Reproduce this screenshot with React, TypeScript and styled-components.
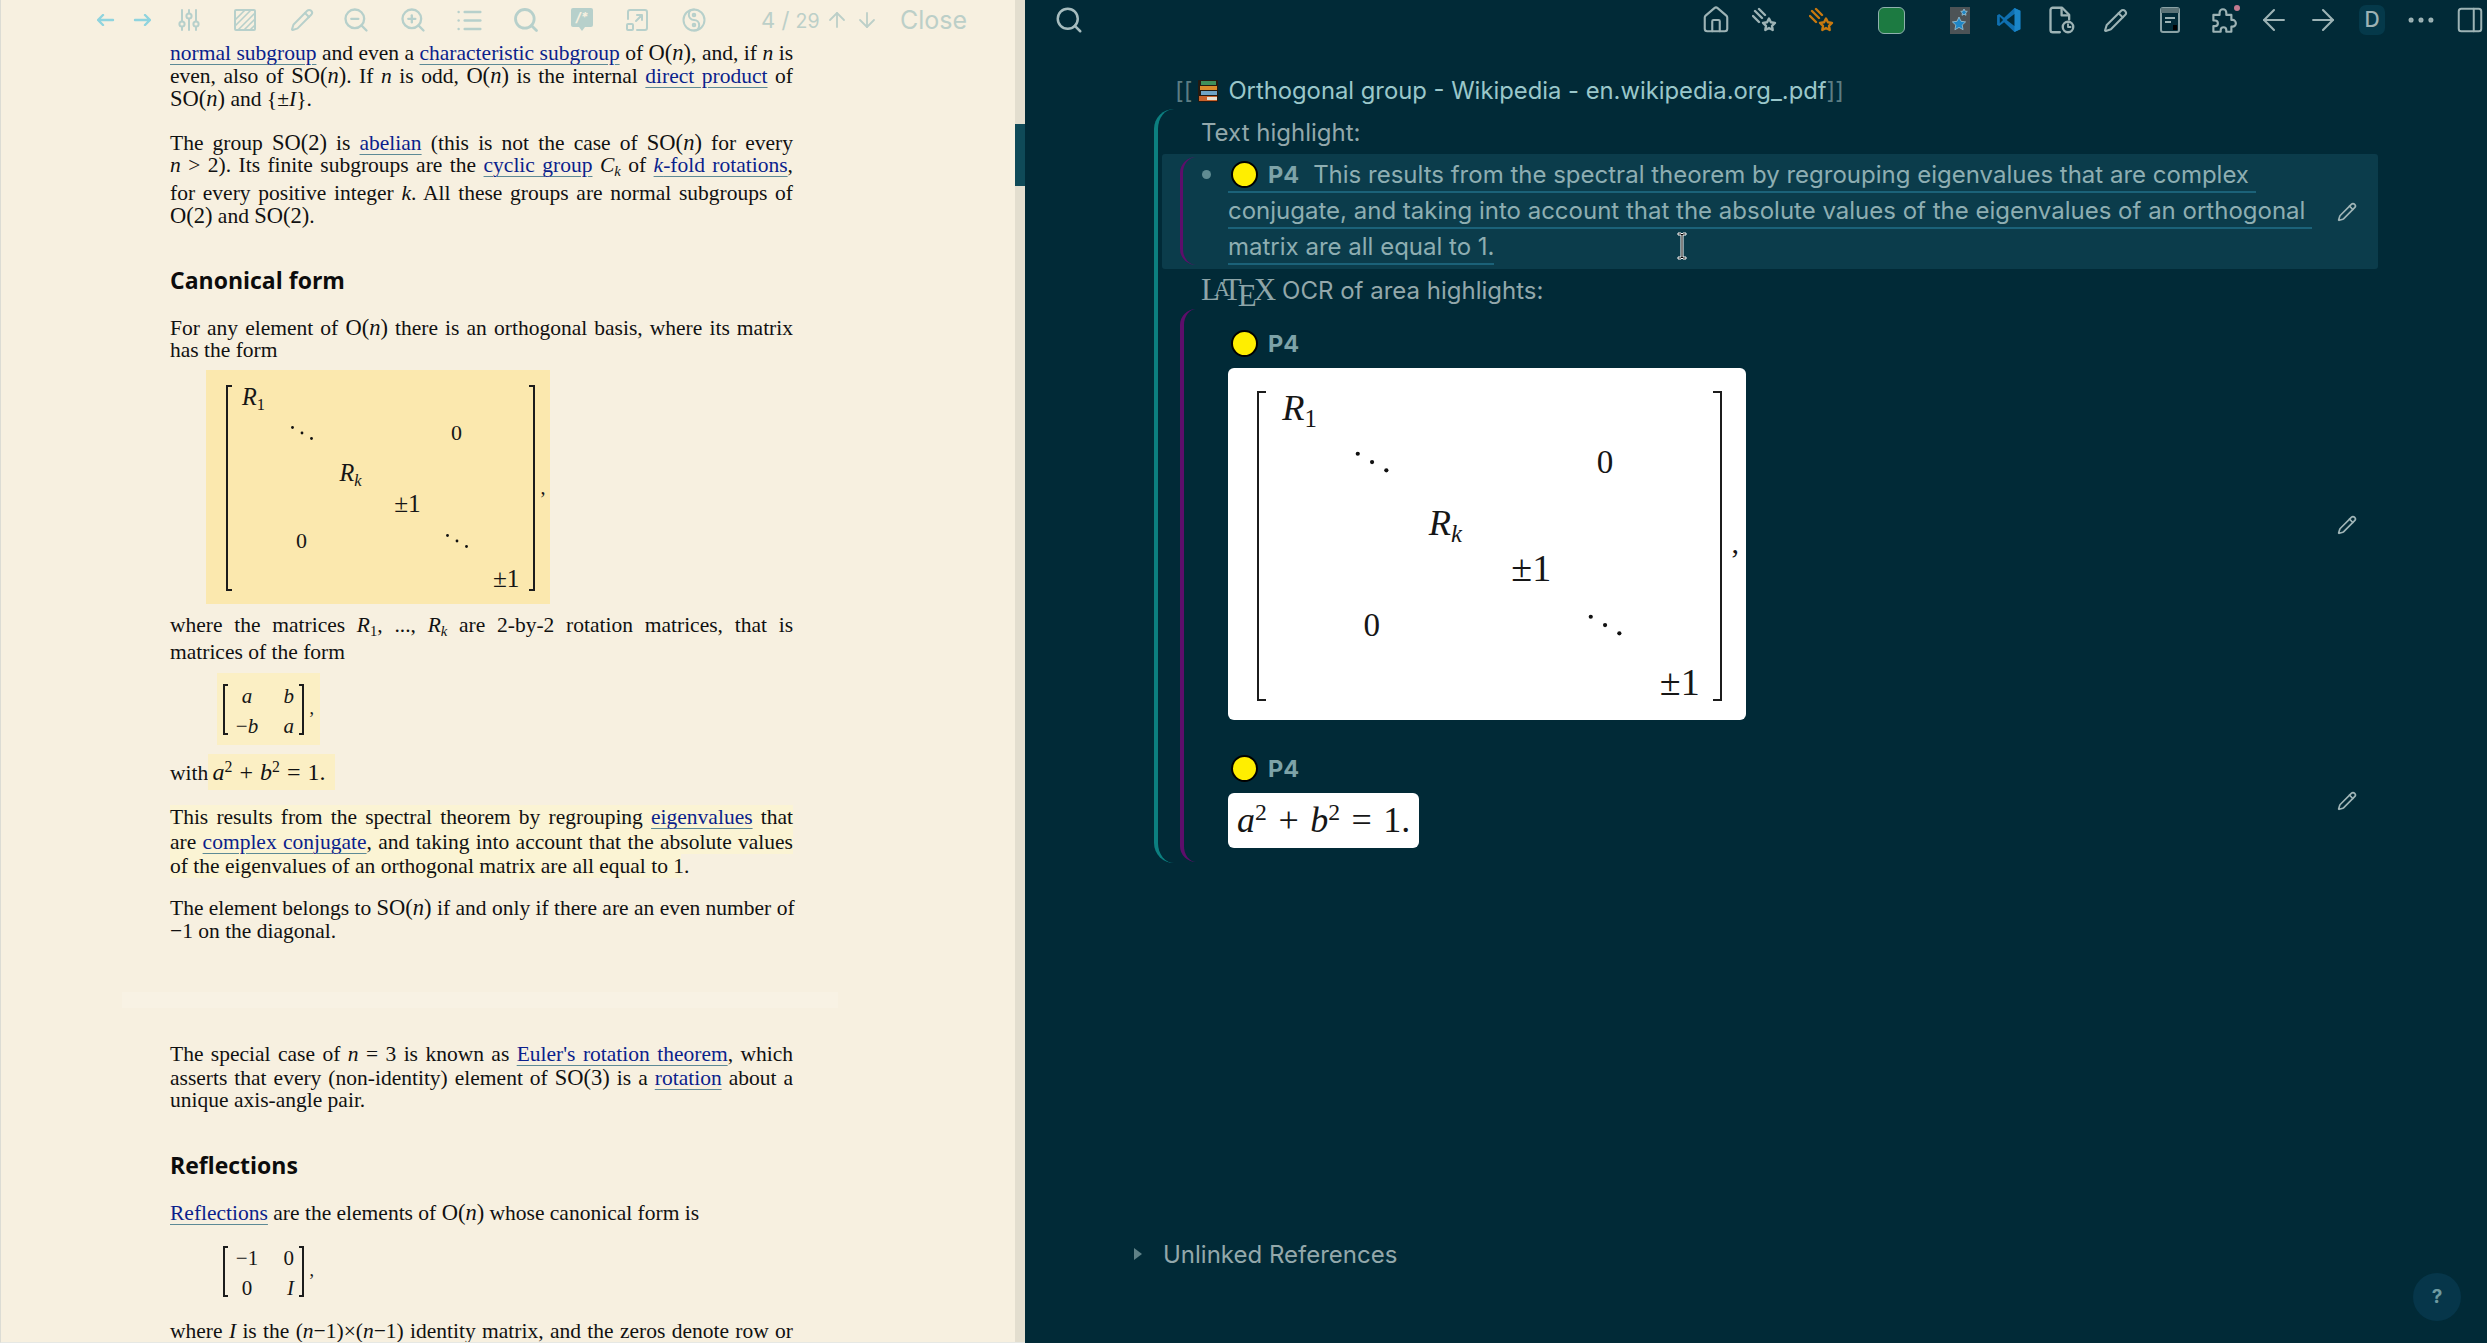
import React from "react";
import styled, { createGlobalStyle } from "styled-components";
import {
  ArrowLeft, ArrowRight, ArrowUp, ArrowDown, Pencil, ZoomIn, ZoomOut, List, Search,
  House, MoreHorizontal, PanelRight,
} from "lucide-react";

const Global = createGlobalStyle`
  html, body { margin: 0; padding: 0; width: 2487px; height: 1343px; overflow: hidden; background: #012a37; }
  * { box-sizing: border-box; }
`;

const Screen = styled.div`
  display: flex;
  width: 2487px;
  height: 1343px;
  overflow: hidden;
`;

/* ---------- left: pdf viewer ---------- */
const PdfPanel = styled.div`
  display: flex;
  width: 1025px;
  height: 1343px;
  flex: none;
  background: #f7f0e0;
  border-left: 1px solid #dcdcd4;
  border-bottom: 1px solid #e6e8e4;
`;
const PdfColumn = styled.div`
  flex: 1;
  min-width: 0;
  overflow: hidden;
`;
const ScrollTrack = styled.div`
  width: 10px;
  flex: none;
  background: #e3decf;
`;
const ScrollThumb = styled.div`
  width: 10px;
  height: 62px;
  margin-top: 124px;
  background: #0f4a58;
`;
const Toolbar = styled.div`
  display: flex;
  align-items: center;
  height: 40px;
`;
const PdfBar = styled(Toolbar)`
  padding-left: 88px;
  margin-bottom: 1px;
  color: #b7d0cb;
`;
const Slot = styled.div<{ $ml?: number; $color?: string }>`
  width: 34px;
  height: 34px;
  flex: none;
  display: flex;
  align-items: center;
  justify-content: center;
  margin-left: ${(p) => p.$ml ?? 0}px;
  color: ${(p) => p.$color ?? "inherit"};
`;
const Counter = styled.div`
  margin-left: 50px;
  width: 58px;
  font: 400 22px/1 Inter, sans-serif;
  color: #bccfc8;
  white-space: nowrap;
`;
const CounterSmall = styled.span`
  font-size: 19.5px;
`;
const CloseLabel = styled.div`
  margin-left: 16px;
  font: 400 25px/1 Inter, sans-serif;
  color: #bccfc8;
`;
const PdfText = styled.div`
  width: 623px;
  margin-left: 169px;
  font-family: "Liberation Serif", "Times New Roman", serif;
  font-size: 21.5px;
  color: #111;
`;
const Para = styled.div<{ $mt?: number }>`
  margin-top: ${(p) => p.$mt ?? 0}px;
`;
const Line = styled.div<{ $h?: number; $fit?: boolean; $tint?: boolean }>`
  height: ${(p) => p.$h ?? 23}px;
  line-height: ${(p) => p.$h ?? 23}px;
  white-space: nowrap;
  text-align: justify;
  text-align-last: ${(p) => (p.$fit ? "left" : "justify")};
  ${(p) => (p.$tint ? "background: #fbf4d4;" : "")}
`;
const TintedLast = styled(Line)`
  width: 511px;
`;
const Doc = styled.a`
  color: #0b1f8c;
  text-decoration: underline;
  text-decoration-color: #5d8a96;
  text-decoration-thickness: 1px;
  text-underline-offset: 4px;
`;
const M = styled.span`
  font-size: 22.5px;
`;
const Heading = styled.div<{ $mt: number }>`
  margin-top: ${(p) => p.$mt}px;
  height: 30px;
  font: 700 23px/30px "Open Sans", sans-serif;
  color: #0c0c0c;
`;
const I = styled.i`
  font-style: italic;
`;
const Sub = styled.sub`
  font-size: 0.68em;
  line-height: 0;
  vertical-align: -0.3em;
`;
const Sup = styled.sup`
  font-size: 0.66em;
  line-height: 0;
  vertical-align: 0.5em;
`;
const EqMark = styled.span`
  display: inline-block;
  width: 127px;
  height: 36px;
  margin-left: -6px;
  padding-left: 5px;
  background: #fbefc4;
  font-size: 24px;
  word-spacing: 1px;
  text-align-last: left;
`;
const PageBreak = styled.div`
  width: 716px;
  height: 16px;
  margin: 48px 0 35px -48px;
  background: #f8f2e4;
`;

/* matrices */
const MatrixFrame = styled.div<{ $s: number; $bg: string }>`
  width: ${(p) => 344 * p.$s}px;
  padding: ${(p) => 15 * p.$s}px 0 ${(p) => 13 * p.$s}px ${(p) => 19.5 * p.$s}px;
  background: ${(p) => p.$bg};
  display: flex;
  align-items: stretch;
  color: #161616;
  font-family: "Liberation Serif", serif;
  font-size: ${(p) => 22 * p.$s}px;
  flex: none;
`;
const Bracket = styled.div<{ $side: "l" | "r"; $w: number; $b: number }>`
  flex: none;
  width: ${(p) => p.$w}px;
  border: ${(p) => p.$b}px solid #1c1c1c;
  ${(p) => (p.$side === "l" ? "border-right: 0;" : "border-left: 0;")}
`;
const BigGrid = styled.div<{ $s: number }>`
  display: grid;
  flex: none;
  width: ${(p) => 297 * p.$s}px;
  height: ${(p) => 206 * p.$s}px;
  grid-template-columns: ${(p) => [44, 52, 46, 68, 30, 57].map((n) => `${n * p.$s}px`).join(" ")};
  grid-template-rows: ${(p) => [23, 49, 32, 28, 48, 27].map((n) => `${n * p.$s}px`).join(" ")};
`;
const Cell = styled.div<{ $c: number; $r: number; $end?: number }>`
  grid-column: ${(p) => p.$c};
  grid-row: ${(p) => p.$r};
  display: flex;
  align-items: center;
  justify-content: ${(p) => (p.$end !== undefined ? "flex-end" : "center")};
  padding-right: ${(p) => p.$end ?? 0}px;
  white-space: nowrap;
`;
const Term = styled.span<{ $k?: number }>`
  font-size: ${(p) => p.$k ?? 1}em;
`;
const Comma = styled.div<{ $s: number }>`
  align-self: center;
  margin-left: ${(p) => 6 * p.$s}px;
  margin-top: ${(p) => -3 * p.$s}px;
  font-size: ${(p) => 20 * p.$s}px;
  line-height: 1;
`;
const SmallFrame = styled.div<{ $bg?: string; $w: number; $pl: number }>`
  display: flex;
  width: ${(p) => p.$w}px;
  padding: 11px 0 10px ${(p) => p.$pl}px;
  margin-left: ${(p) => 223 - p.$pl - 170}px;
  background: ${(p) => p.$bg ?? "transparent"};
  font-size: 21px;
  color: #161616;
`;
const SmallGrid = styled.div`
  display: grid;
  width: 71px;
  height: 51px;
  grid-template-columns: 38px 33px;
  grid-template-rows: 24px 36px;
`;
const DotsSvg = styled.svg<{ $s: number }>`
  width: ${(p) => 24 * p.$s}px;
  height: ${(p) => 16 * p.$s}px;
  fill: #111;
`;
const Dots = ({ s }: { s: number }) => (
  <DotsSvg $s={s} viewBox="0 0 24 16">
    <circle cx="2.5" cy="2.5" r="1.4" />
    <circle cx="12" cy="8" r="1.4" />
    <circle cx="21.5" cy="13.5" r="1.4" />
  </DotsSvg>
);

const BigMatrix = ({ s, bg }: { s: number; bg: string }) => (
  <MatrixFrame $s={s} $bg={bg}>
    <Bracket $side="l" $w={6 * s} $b={s > 1 ? 2.5 : 2} />
    <BigGrid $s={s}>
      <Cell $c={1} $r={1}><Term $k={1.1}><I>R</I><Sub>1</Sub></Term></Cell>
      <Cell $c={2} $r={2}><Dots s={s} /></Cell>
      <Cell $c={5} $r={2}>0</Cell>
      <Cell $c={3} $r={3}><Term $k={1.1}><I>R</I><Sub><I>k</I></Sub></Term></Cell>
      <Cell $c={4} $r={4}><Term $k={1.15}>±1</Term></Cell>
      <Cell $c={2} $r={5}>0</Cell>
      <Cell $c={5} $r={5}><Dots s={s} /></Cell>
      <Cell $c={6} $r={6} $end={9 * s}><Term $k={1.15}>±1</Term></Cell>
    </BigGrid>
    <Bracket $side="r" $w={6 * s} $b={s > 1 ? 2.5 : 2} />
    <Comma $s={s}>,</Comma>
  </MatrixFrame>
);

const SmallMatrix = ({ bg, w, pl, a, b, c, d }: { bg?: string; w: number; pl: number; a: React.ReactNode; b: React.ReactNode; c: React.ReactNode; d: React.ReactNode }) => (
  <SmallFrame $bg={bg} $w={w} $pl={pl}>
    <Bracket $side="l" $w={5} $b={2} />
    <SmallGrid>
      <Cell $c={1} $r={1}><Term>{a}</Term></Cell>
      <Cell $c={2} $r={1} $end={5}><Term>{b}</Term></Cell>
      <Cell $c={1} $r={2}><Term>{c}</Term></Cell>
      <Cell $c={2} $r={2} $end={5}><Term>{d}</Term></Cell>
    </SmallGrid>
    <Bracket $side="r" $w={5} $b={2} />
    <Comma $s={0.9}>,</Comma>
  </SmallFrame>
);

const MatrixIndent = styled.div`
  margin-left: 36px;
`;

/* ---------- right: notes ---------- */
const NotePanel = styled.div`
  position: relative;
  flex: 1;
  height: 1343px;
  background: #012a37;
  display: flex;
  flex-direction: column;
  font-family: Inter, "Noto Sans", sans-serif;
  color: #93a8ab;
`;
const NoteBar = styled(Toolbar)`
  color: #9db3b5;
`;
const BarSearch = styled.div`
  margin-left: 29px;
  display: flex;
  color: #a6bcbe;
`;
const BarRight = styled.div`
  margin-left: auto;
  display: flex;
  align-items: center;
`;
const GreenSwatch = styled.div`
  width: 27px;
  height: 27px;
  border-radius: 6px;
  background: #1c7a41;
  border: 1px solid #8fb0ae;
`;
const ExtTile = styled.div`
  width: 20px;
  height: 27px;
  background: #4d5356;
  display: flex;
  align-items: center;
  justify-content: center;
`;
const DTile = styled.div`
  width: 26px;
  height: 30px;
  border-radius: 7px;
  background: #05394a;
  color: #9db3b5;
  font: 500 21px/30px Inter, sans-serif;
  text-align: center;
`;
const Dot = styled.i`
  position: absolute;
  right: 0;
  top: 2px;
  width: 6px;
  height: 6px;
  border-radius: 50%;
  background: #c27a8f;
`;
const PuzzleWrap = styled(Slot)`
  position: relative;
`;
const TitleRow = styled.div`
  margin: 33px 0 0 150px;
  height: 36px;
  display: flex;
  align-items: center;
  font-size: 23.8px;
  line-height: 36px;
  white-space: nowrap;
`;
const Brackets = styled.span`
  color: #5c7d84;
`;
const TitleLink = styled.span`
  color: #9ac7ca;
`;
const BookIcon = styled.svg`
  width: 24px;
  height: 24px;
  margin: 0 8px 0 4px;
  flex: none;
`;
const TealBranch = styled.div`
  margin: 0 0 0 129px;
  width: 1224px;
  border-left: 4px solid #0c7f80;
  border-radius: 20px;
  padding: 6px 0 1px;
`;
const Label = styled.div`
  height: 36px;
  margin-left: 43px;
  font-size: 24px;
  line-height: 36px;
  display: flex;
  align-items: center;
  white-space: nowrap;
`;
const ActiveBlock = styled.div`
  margin: 3px 0 4px 4px;
  height: 115px;
  background: #0b3c4b;
  border-radius: 3px;
  padding-top: 3px;
  display: flex;
  justify-content: space-between;
  align-items: center;
`;
const PurpleBranch = styled.div<{ $pb?: number; $pt?: number; $w: number }>`
  margin-left: 18px;
  flex: 1;
  align-self: flex-start;
  border-left: ${(p) => p.$w}px solid #5e0e6b;
  border-radius: 16px;
  padding: ${(p) => p.$pt ?? 0}px 0 ${(p) => p.$pb ?? 0}px ${(p) => 48 - p.$w}px;
  position: relative;
`;
const PurpleOuter = styled(PurpleBranch)`
  margin-left: 22px;
`;
const Bullet = styled.i`
  position: absolute;
  left: 19px;
  top: 13px;
  width: 9px;
  height: 9px;
  border-radius: 50%;
  background: #5f8b92;
`;
const HLine = styled.div`
  width: fit-content;
  height: 36px;
  display: flex;
  align-items: center;
  font-size: 24px;
  white-space: pre;
  border-bottom: 2px solid #1b6279;
  color: #8eaeb2;
  padding-top: 1px;
`;
const Mark = styled.i`
  width: 27px;
  height: 27px;
  flex: none;
  margin-left: 3px;
  border-radius: 50%;
  background: #ffee00;
  border: 2px solid #000;
`;
const PageTag = styled.b`
  margin: 0 14px 0 10px;
  font-weight: 700;
  color: #7da3a8;
  font-size: 23.5px;
`;
const TagRow = styled.div`
  height: 36px;
  display: flex;
  align-items: center;
`;
const EditRow = styled.div<{ $mt?: number }>`
  margin-top: ${(p) => p.$mt ?? 0}px;
  display: flex;
  align-items: center;
  justify-content: space-between;
`;
const PencilBtn = styled.div<{ $mt?: number }>`
  width: 20px;
  height: 20px;
  flex: none;
  margin: ${(p) => p.$mt ?? 0}px 21px 0 0;
  color: #a0b5b7;
  display: flex;
`;
const ShotFrame = styled.div`
  margin-top: 7px;
  border-radius: 6px;
  overflow: hidden;
  width: fit-content;
`;
const EqShot = styled.div`
  margin-top: 7px;
  width: 191px;
  height: 55px;
  border-radius: 6px;
  background: #fff;
  color: #161616;
  font: 36px/55px "Liberation Serif", serif;
  word-spacing: 2.5px;
  padding-left: 9px;
  white-space: nowrap;
`;
const Latex = styled.span`
  display: inline-flex;
  align-items: baseline;
  font-family: "Liberation Serif", serif;
  font-size: 31px;
  margin-right: 6px;
  color: #8ea5a8;
`;
const LatexA = styled.span`
  font-size: 22px;
  margin: 0 -7px 0 -6px;
  transform: translateY(-4px);
`;
const LatexE = styled.span`
  margin: 0 -3px 0 -4px;
  transform: translateY(6px);
`;
const Footer = styled.div`
  margin: auto 0 71px 108px;
  height: 36px;
  display: flex;
  align-items: center;
  font-size: 24px;
  color: #93a8ab;
`;
const Caret = styled.svg`
  width: 10px;
  height: 14px;
  margin-right: 20px;
  fill: #5f8187;
`;
const Help = styled.div`
  position: absolute;
  right: 26px;
  bottom: 22px;
  width: 48px;
  height: 48px;
  border-radius: 50%;
  background: #06364a;
  color: #6e9aa1;
  font: 700 19px/48px Inter, sans-serif;
  text-align: center;
`;
const IBeam = styled.svg`
  position: absolute;
  left: 651px;
  top: 232px;
  width: 12px;
  height: 28px;
`;

/* ---------- drawn icons ---------- */
const Ico = ({ children, size = 24, sw = 2, vb = "0 0 24 24" }: { children: React.ReactNode; size?: number; sw?: number; vb?: string }) => (
  <svg width={size} height={size} viewBox={vb} fill="none" stroke="currentColor" strokeWidth={sw} strokeLinecap="round" strokeLinejoin="round">
    {children}
  </svg>
);
const SlidersIco = () => (
  <Ico>
    <path d="M5 2v11M5 19v3M12 2v3M12 11v11M19 2v11M19 19v3" />
    <circle cx="5" cy="16" r="2.6" /><circle cx="12" cy="8" r="2.6" /><circle cx="19" cy="16" r="2.6" />
  </Ico>
);
const HatchIco = () => (
  <Ico>
    <rect x="2" y="2" width="20" height="20" rx="1" />
    <path d="M2 12 12 2M2 18 18 2M5 22 22 5M11 22 22 11M17 22l5-5" strokeWidth="1.6" />
  </Ico>
);
const SmallArrow = ({ flip }: { flip?: boolean }) => (
  <svg width="18" height="12" viewBox="0 0 18 12" fill="none" stroke="currentColor" strokeWidth="2.4" strokeLinecap="round" strokeLinejoin="round">
    <path d={flip ? "M17 6H2M12 1l5 5-5 5" : "M1 6h15M6 1 1 6l5 5"} />
  </svg>
);
const CommentIco = () => (
  <svg width="24" height="26" viewBox="0 0 24 26">
    <path d="M3 1h18a2 2 0 0 1 2 2v15a2 2 0 0 1-2 2h-6l-3 4-3-4H3a2 2 0 0 1-2-2V3a2 2 0 0 1 2-2z" fill="#b7d0cb" />
    <text x="12" y="15" textAnchor="middle" fontFamily="Inter" fontSize="13" fontStyle="italic" fontWeight="700" fill="#f7f0e0">/*</text>
  </svg>
);
const ExpandIco = () => (
  <Ico>
    <path d="M3 11V4a2 2 0 0 1 2-2h15a2 2 0 0 1 2 2v16a2 2 0 0 1-2 2h-8" />
    <rect x="2" y="16" width="6" height="6" rx="1" />
    <path d="M11 13l6-6M12 7h5v5" />
  </Ico>
);
const YinYangIco = () => (
  <Ico>
    <circle cx="12" cy="12" r="10.5" />
    <path d="M12 1.5c-3 0-5.2 2.4-5.2 5.2S9 12 12 12s5.2 2.4 5.2 5.3-2.2 5.2-5.2 5.2" />
    <circle cx="12" cy="7" r="1.3" /><circle cx="12" cy="17" r="1.3" />
  </Ico>
);
const Shooting = ({ color }: { color: string }) => (
  <svg width="26" height="26" viewBox="0 0 26 26" fill="none" stroke={color} strokeWidth="2.4" strokeLinecap="round" strokeLinejoin="round">
    <path d="M3 4l7 7M7 2l6 6M1 9l6 6" />
    <path d="M17 11.5l1.9 3.8 4.1.6-3 2.9.7 4.2-3.7-2-3.7 2 .7-4.2-3-2.9 4.1-.6z" />
  </svg>
);
const StarsIco = () => (
  <svg width="20" height="27" viewBox="0 0 20 27">
    <g fill="#1f86c5" stroke="#9cc4d4" strokeWidth="0.8">
      <path d="M9 10l2 4.3 4.6.6-3.4 3.2.9 4.6L9 20.4l-4.1 2.3.9-4.6-3.4-3.2 4.6-.6z" />
      <path d="M14 2l1 2.1 2.3.3-1.7 1.6.4 2.3-2-1.1-2 1.1.4-2.3-1.7-1.6 2.3-.3z" />
    </g>
  </svg>
);
const VsCodeIco = () => (
  <svg width="26" height="26" viewBox="0 0 24 24">
    <path d="M17 1 7.5 10 3 6.5 1 7.5v9l2 1 4.5-3.5L17 23l5.5-2.5v-17z" fill="#0f6fb0" />
    <path d="M17 1l5.5 2.5v17L17 23z" fill="#1a86c9" />
    <path d="M17 6.5 9.8 12l7.2 5.5zM3.5 9v6L6.5 12z" fill="#012a37" />
  </svg>
);
const FileClockIco = () => (
  <Ico size={28} sw={2}>
    <path d="M11 22.5H5a2 2 0 0 1-2-2v-17a2 2 0 0 1 2-2h8l6 6v4" />
    <path d="M12.5 2v6h6" />
    <circle cx="18" cy="18" r="4.5" />
    <path d="M18 15.5V18h2.2" strokeWidth="1.6" />
  </Ico>
);
const WindowIco = () => (
  <svg width="20" height="26" viewBox="0 0 20 26" fill="none">
    <rect x="1" y="1" width="18" height="24" rx="2" stroke="#8aa2a5" strokeWidth="2" />
    <rect x="1" y="1" width="18" height="5" fill="#5b7377" />
    <path d="M5 11h10M5 15h6" stroke="#9db3b5" strokeWidth="2" />
    <rect x="13" y="18" width="4" height="5" fill="#000" />
  </svg>
);
const PuzzleIco = () => (
  <Ico size={27} sw={1.9}>
    <path d="M3 7h5.5V5a3 3 0 0 1 6 0v2H19v4.5h1a3 3 0 0 1 0 6h-1V22h-4.5v-1.5a2.5 2.5 0 0 0-5 0V22H3v-5h1.5a2.5 2.5 0 0 0 0-5H3z" />
  </Ico>
);
const Books = () => (
  <BookIcon viewBox="0 0 24 24">
    <rect x="2" y="1" width="20" height="22" fill="#231a12" rx="1" />
    <rect x="5" y="2" width="15" height="4" fill="#3f8f5a" />
    <rect x="4" y="7" width="17" height="4" fill="#d98b2b" />
    <rect x="5" y="12" width="16" height="4" fill="#6fa3c7" />
    <rect x="3" y="17" width="18" height="5" fill="#c8622c" />
    <rect x="11" y="18" width="10" height="3" fill="#e7e2d6" />
  </BookIcon>
);

const P = Pencil;

export default function App() {
  return (
    <Screen>
      <Global />
      <PdfPanel>
        <PdfColumn>
          <PdfBar>
            <Slot $color="#8fd4de"><SmallArrow /></Slot>
            <Slot $ml={2} $color="#8fd4de"><SmallArrow flip /></Slot>
            <Slot $ml={13}><SlidersIco /></Slot>
            <Slot $ml={22}><HatchIco /></Slot>
            <Slot $ml={23}><P size={24} /></Slot>
            <Slot $ml={20}><ZoomOut size={28} /></Slot>
            <Slot $ml={23}><ZoomIn size={28} /></Slot>
            <Slot $ml={22}><List size={29} /></Slot>
            <Slot $ml={23}><Search size={28} strokeWidth={2.4} /></Slot>
            <Slot $ml={22}><CommentIco /></Slot>
            <Slot $ml={21}><ExpandIco /></Slot>
            <Slot $ml={23}><YinYangIco /></Slot>
            <Counter>4 / <CounterSmall>29</CounterSmall></Counter>
            <Slot $ml={1} $color="#bccfc8"><ArrowUp size={24} strokeWidth={1.8} /></Slot>
            <Slot $ml={-4} $color="#bccfc8"><ArrowDown size={24} strokeWidth={1.8} /></Slot>
            <CloseLabel>Close</CloseLabel>
          </PdfBar>
          <PdfText>
            <Para>
              <Line><Doc>normal subgroup</Doc> and even a <Doc>characteristic subgroup</Doc> of <M>O(<I>n</I>)</M>, and, if <I>n</I> is</Line>
              <Line>even, also of <M>SO(<I>n</I>)</M>. If <I>n</I> is odd, <M>O(<I>n</I>)</M> is the internal <Doc>direct product</Doc> of</Line>
              <Line $fit><M>SO(<I>n</I>)</M> and {"{"}±<I>I</I>{"}"}.</Line>
            </Para>
            <Para $mt={21}>
              <Line>The group <M>SO(2)</M> is <Doc>abelian</Doc> (this is not the case of <M>SO(<I>n</I>)</M> for every</Line>
              <Line><I>n</I> &gt; 2). Its finite subgroups are the <Doc>cyclic group</Doc> <I>C</I><Sub><I>k</I></Sub> of <Doc><I>k</I>-fold rotations</Doc>,</Line>
              <Line $h={33}>for every positive integer <I>k</I>. All these groups are normal subgroups of</Line>
              <Line $fit $h={12}><M>O(2)</M> and <M>SO(2)</M>.</Line>
            </Para>
            <Heading $mt={43}>Canonical form</Heading>
            <Para $mt={21}>
              <Line>For any element of <M>O(<I>n</I>)</M> there is an orthogonal basis, where its matrix</Line>
              <Line $fit>has the form</Line>
            </Para>
            <Para $mt={8}>
              <MatrixIndent><BigMatrix s={1} bg="#fbe8ae" /></MatrixIndent>
            </Para>
            <Para $mt={10}>
              <Line>where the matrices <I>R</I><Sub>1</Sub>, ..., <I>R</I><Sub><I>k</I></Sub> are 2-by-2 rotation matrices, that is</Line>
              <Line $fit $h={31}>matrices of the form</Line>
            </Para>
            <Para $mt={5}>
              <SmallMatrix bg="#fbefc4" w={103} pl={6} a={<I>a</I>} b={<I>b</I>} c={<>−<I>b</I></>} d={<I>a</I>} />
            </Para>
            <Para $mt={9}>
              <Line $fit $h={36}>with <EqMark><I>a</I><Sup>2</Sup> + <I>b</I><Sup>2</Sup> = 1.</EqMark></Line>
            </Para>
            <Para $mt={15}>
              <Line $tint $h={25}>This results from the spectral theorem by regrouping <Doc>eigenvalues</Doc> that</Line>
              <Line $tint $h={24}>are <Doc>complex conjugate</Doc>, and taking into account that the absolute values</Line>
              <TintedLast $tint $h={24}>of the eigenvalues of an orthogonal matrix are all equal to 1.</TintedLast>
            </Para>
            <Para $mt={18}>
              <Line>The element belongs to <M>SO(<I>n</I>)</M> if and only if there are an even number of</Line>
              <Line $fit $h={25}>−1 on the diagonal.</Line>
            </Para>
            <PageBreak />
            <Para>
              <Line>The special case of <I>n</I> = 3 is known as <Doc>Euler's rotation theorem</Doc>, which</Line>
              <Line>asserts that every (non-identity) element of <M>SO(3)</M> is a <Doc>rotation</Doc> about a</Line>
              <Line $fit>unique axis-angle pair.</Line>
            </Para>
            <Heading $mt={38}>Reflections</Heading>
            <Para $mt={21}>
              <Line $fit><Doc>Reflections</Doc> are the elements of <M>O(<I>n</I>)</M> whose canonical form is</Line>
            </Para>
            <Para $mt={11}>
              <SmallMatrix w={103} pl={6} a="−1" b="0" c="0" d={<I>I</I>} />
            </Para>
            <Para $mt={14}>
              <Line $h={20}>where <I>I</I> is the (<I>n</I>−1)×(<I>n</I>−1) identity matrix, and the zeros denote row or</Line>
            </Para>
          </PdfText>
        </PdfColumn>
        <ScrollTrack><ScrollThumb /></ScrollTrack>
      </PdfPanel>

      <NotePanel>
        <NoteBar>
          <BarSearch><Search size={30} strokeWidth={2} /></BarSearch>
          <BarRight>
            <Slot><House size={30} strokeWidth={1.7} /></Slot>
            <Slot $ml={15}><Shooting color="#9db3b5" /></Slot>
            <Slot $ml={23}><Shooting color="#c9790f" /></Slot>
            <Slot $ml={35}><GreenSwatch /></Slot>
            <Slot $ml={35}><ExtTile><StarsIco /></ExtTile></Slot>
            <Slot $ml={15}><VsCodeIco /></Slot>
            <Slot $ml={18}><FileClockIco /></Slot>
            <Slot $ml={20}><P size={25} /></Slot>
            <Slot $ml={21}><WindowIco /></Slot>
            <PuzzleWrap $ml={19}><PuzzleIco /><Dot /></PuzzleWrap>
            <Slot $ml={17}><ArrowLeft size={34} strokeWidth={1.5} /></Slot>
            <Slot $ml={15}><ArrowRight size={34} strokeWidth={1.5} /></Slot>
            <Slot $ml={15}><DTile>D</DTile></Slot>
            <Slot $ml={15}><MoreHorizontal size={34} strokeWidth={1.6} /></Slot>
            <Slot $ml={15}><PanelRight size={30} strokeWidth={1.6} /></Slot>
          </BarRight>
        </NoteBar>
        <TitleRow>
          <Brackets>[[</Brackets><Books /><TitleLink>Orthogonal group - Wikipedia - en.wikipedia.org_.pdf</TitleLink><Brackets>]]</Brackets>
        </TitleRow>
        <TealBranch>
          <Label>Text highlight:</Label>
          <ActiveBlock>
            <PurpleBranch $w={3}>
              <Bullet />
              <HLine><Mark /><PageTag>P4</PageTag>This results from the spectral theorem by regrouping eigenvalues that are complex </HLine>
              <HLine>conjugate, and taking into account that the absolute values of the eigenvalues of an orthogonal </HLine>
              <HLine>matrix are all equal to 1.</HLine>
            </PurpleBranch>
            <PencilBtn $mt={-2}><P size={20} /></PencilBtn>
          </ActiveBlock>
          <Label><Latex>L<LatexA>A</LatexA>T<LatexE>E</LatexE>X</Latex>OCR of area highlights:</Label>
          <PurpleOuter $w={4} $pt={16} $pb={14}>
            <EditRow>
              <div>
                <TagRow><Mark /><PageTag>P4</PageTag></TagRow>
                <ShotFrame><BigMatrix s={1.505} bg="#ffffff" /></ShotFrame>
              </div>
              <PencilBtn $mt={4}><P size={20} /></PencilBtn>
            </EditRow>
            <EditRow $mt={30}>
              <div>
                <TagRow><Mark /><PageTag>P4</PageTag></TagRow>
                <EqShot><I>a</I><Sup>2</Sup> + <I>b</I><Sup>2</Sup> = 1.</EqShot>
              </div>
              <PencilBtn $mt={4}><P size={20} /></PencilBtn>
            </EditRow>
          </PurpleOuter>
        </TealBranch>
        <Footer>
          <Caret viewBox="0 0 10 14"><path d="M1 1l8 6-8 6z" /></Caret>
          Unlinked References
        </Footer>
        <Help>?</Help>
        <IBeam viewBox="0 0 12 28">
          <path d="M2 1h3l1 1 1-1h3v2H7v22h3v2H7l-1-1-1 1H2v-2h3V3H2z" fill="#000" stroke="#fff" strokeWidth="1" />
        </IBeam>
      </NotePanel>
    </Screen>
  );
}
